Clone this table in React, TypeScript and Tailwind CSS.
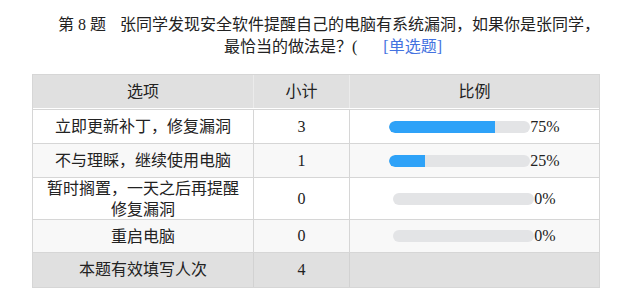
const rows = [
  { label: "立即更新补丁，修复漏洞", count: 3, pct: 75, h: "h-[34px]", bg: "bg-white" },
  { label: "不与理睬，继续使用电脑", count: 1, pct: 25, h: "h-[34px]", bg: "bg-[#f8f8f8]" },
  { label: "暂时搁置，一天之后再提醒修复漏洞", count: 0, pct: 0, h: "h-[42px]", bg: "bg-white" },
  { label: "重启电脑", count: 0, pct: 0, h: "h-[33px]", bg: "bg-[#f8f8f8]" },
];

function Bar({ pct }: { pct: number }) {
  return (
    <span className="inline-flex items-center">
      <span className="inline-block h-[12px] w-[141px] overflow-hidden rounded-full bg-[#e3e4e6]">
        <span className="block h-full rounded-l-full bg-[#2ea2f8]" style={{ width: `${pct}%` }} />
      </span>
      <span>{pct}%</span>
    </span>
  );
}

export default function App() {
  return (
    <div
      className="min-h-[305px] w-[638px] bg-white text-[16px] text-[#222]"
      style={{ fontFamily: '"Liberation Serif", "Noto Sans CJK SC", serif' }}
    >
      <div className="pl-[20px] pt-[14px] text-center leading-[22px]">
        <div>
          第 8 题<span className="ml-[14px]">张同学发现安全软件提醒自己的电脑有系统漏洞，如果你是张同学，</span>
        </div>
        <div className="pl-[8px]">
          最恰当的做法是？(<span className="ml-[26px] text-[#4472e0]">[单选题]</span>
        </div>
      </div>

      <div className="ml-[32px] mt-[16px] w-[568px] border border-[#d6d6d6]">
        <div className="grid h-[34px] grid-cols-[221px_96px_1fr] border-b border-white bg-[#e0e0e0] text-center">
          <div className="flex items-center justify-center border-r border-[#ebebeb]">选项</div>
          <div className="flex items-center justify-center border-r border-[#ebebeb]">小计</div>
          <div className="flex items-center justify-center">比例</div>
        </div>

        {rows.map((r) => (
          <div key={r.label} className={`grid grid-cols-[221px_96px_1fr] border-t border-[#d6d6d6] text-center ${r.h} ${r.bg}`}>
            <div className="flex items-center justify-center border-r border-[#d6d6d6] px-2 leading-[21px]">
              {r.label}
            </div>
            <div className="flex items-center justify-center border-r border-[#d6d6d6]">{r.count}</div>
            <div className="flex items-center justify-center">
              <Bar pct={r.pct} />
            </div>
          </div>
        ))}

        <div className="grid h-[35px] grid-cols-[221px_96px_1fr] border-t border-[#d6d6d6] bg-[#e0e0e0] text-center">
          <div className="flex items-center justify-center border-r border-[#d2d2d2]">本题有效填写人次</div>
          <div className="flex items-center justify-center border-r border-[#d2d2d2]">4</div>
          <div />
        </div>
      </div>
    </div>
  );
}
